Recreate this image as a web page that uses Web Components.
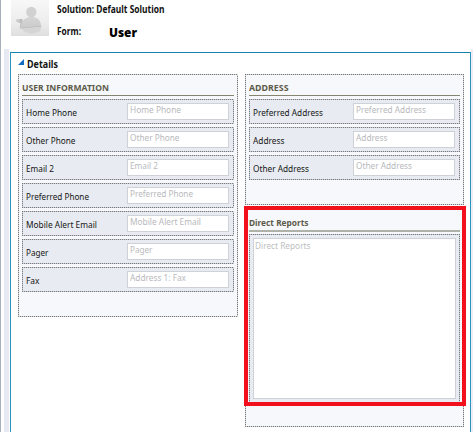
<!DOCTYPE html>
<html lang="en"><head><meta charset="utf-8"><title>Form: User</title>
<style>html,body{margin:0;width:473px;height:432px;overflow:hidden;background:#fff;font-family:"Noto Sans","Open Sans",sans-serif}</style></head>
<body><form-designer></form-designer>
<script>
const define=(name,html,setup)=>customElements.define(name,class extends HTMLElement{
  connectedCallback(){
    if(this.shadowRoot)return;
    this.attachShadow({mode:'open'}).innerHTML=html;
    if(setup)setup(this,this.shadowRoot);
  }
});
/* One line of text, condensed to the width in its "w" attribute. */
define('fit-text','<style>:host{display:block;white-space:nowrap;line-height:14px;height:14px}span{display:inline-block;transform-origin:0 50%}</style><span></span>',(el,root)=>{
  const s=root.querySelector('span');s.textContent=el.getAttribute('text');
  const w=+el.getAttribute('w');
  el.style.width=w+'px';
  s.style.transform=`scaleX(${(w/s.getBoundingClientRect().width).toFixed(4)})`;
});
define('user-picture',`<style>:host{display:block;width:38px;height:36px}svg{display:block}</style>
<svg width="38" height="36" viewBox="0 0 38 36"><defs>
<linearGradient id="b" x2="0" y2="1"><stop stop-color="#f8f8f8"/><stop offset=".65" stop-color="#ececec"/><stop offset="1" stop-color="#dedede"/></linearGradient>
<linearGradient id="p" x2="0" y2="1"><stop stop-color="#d6d6d6"/><stop offset="1" stop-color="#cbcbcb"/></linearGradient>
<linearGradient id="s"><stop stop-color="#d4d4d4"/><stop offset="1" stop-color="#b9b9b9"/></linearGradient></defs>
<rect width="38" height="36" fill="url(#b)"/>
<path d="M4.5 19.5l7-.8v7.8l-3 2 1-5.2-4-1.2z" fill="url(#s)"/>
<path d="M11 29l19-2-.5 4q-9 5-17 0z" fill="#d5d5d5"/>
<path d="M9.5 28.3q1-9 6.5-10.6l2.5-.6-.5-1.6h5l-.5 1.6 3 .9q4.3 2 4.7 8.4z" fill="url(#p)"/>
<path d="M9.5 28.3l20.7-1.9" stroke="#b0b0b0" stroke-width=".6"/>
<circle cx="20.3" cy="12" r="5.2" fill="#d1d1d1"/></svg>`);
define('form-header',`<style>:host{display:grid;grid-template-columns:38px 1fr;column-gap:8px;height:49px;padding-left:10px;box-sizing:border-box;font-weight:600;color:#111}
.t{padding-top:3px}.l{display:flex;margin-top:8px;align-items:center}.n{margin-left:27.5px;font-size:13px;font-weight:900;color:#000}.s,.f{font-size:9.8px}.s,.f{font-weight:700}</style>
<user-picture></user-picture><div class="t"><fit-text class="s" text="Solution: Default Solution" w="107.5"></fit-text>
<div class="l"><fit-text class="f" text="Form:" w="24"></fit-text><fit-text class="n" text="User" w="28"></fit-text></div></div>`);
const dots=(a,b,bg)=>`repeating-linear-gradient(90deg,${a} 0 1px,${b} 1px 2px) top/100% 1px no-repeat,
repeating-linear-gradient(90deg,${a} 0 1px,${b} 1px 2px) bottom/100% 1px no-repeat,
repeating-linear-gradient(${a} 0 1px,${b} 1px 2px) left/1px 100% no-repeat,
repeating-linear-gradient(${a} 0 1px,${b} 1px 2px) right/1px 100% no-repeat,${bg}`;
define('form-section',`<style>:host{display:block;box-sizing:border-box;background:${dots('#777a7c','#d2d4d6','#f7f8fb')};padding:7px 4px 0}
.h{height:14px;border-bottom:1px solid #85856f;margin-bottom:3px;color:#5d5c4c;font-size:9.5px;font-weight:700}
:host([soft]){padding-top:8px}:host([soft]) .h{border-bottom:2px solid #aeb2a8;margin-bottom:2px}
.rows{display:grid;gap:3px}</style><div class="h"></div><div class="rows"><slot></slot></div>`,(el,root)=>{
  root.querySelector('.h').innerHTML=line(el.getAttribute('heading'),el.getAttribute('w'));
});
const line=(text,w)=>`<fit-text text="${text}" w="${w}"></fit-text>`;
define('form-field',`<style>:host{display:grid;grid-template-columns:1fr 102px;height:25px;box-sizing:border-box;padding:4px 5px 0 3.5px;background:${dots('#777a7e','#c8cbd2','#e8ebf1')};font-size:9.6px}
.l{color:#161616;padding-top:3px}.i{height:17px;box-sizing:border-box;border:1px solid #ced1d6;background:#fff;color:#b8b9bc;padding-left:1.5px}.i fit-text{margin-top:-1px}</style><div class="l"></div><div class="i"></div>`,(el,root)=>{
  root.querySelector('.l').innerHTML=line(el.getAttribute('label'),el.getAttribute('w'));
  root.querySelector('.i').innerHTML=line(el.getAttribute('hint')||el.getAttribute('label'),el.getAttribute('hw')||el.getAttribute('w'));
});
define('form-area',`<style>:host{display:block;height:169px;box-sizing:border-box;padding:4px 4px 4px;background:${dots('#777a7e','#c8cbd2','#e8ebf1')};font-size:9.6px}
.i{height:161px;box-sizing:border-box;border:1px solid #ced1d6;background:#fff;color:#bebfc2;padding:0 1px}</style><div class="i">${line('Direct Reports',55.5)}</div>`);
define('form-tab',`<style>:host{display:block;box-sizing:border-box;margin:3px 2px 0 6px;height:380px;border:solid #2f94bd;border-top-color:#1682ae;border-width:1px 1px 0;padding:0 6px 0 7px;background:#fff}
.h{display:flex;height:21px;font-size:11px;font-weight:700;color:#151515;padding-top:4px;box-sizing:border-box}.h svg{margin:2px 3px 0 0}
.c{display:grid;grid-template-columns:220px 219px;justify-content:space-between}.r{display:grid;align-content:start;gap:3px}.hot{position:relative}
.hot:after{content:"";position:absolute;box-sizing:border-box;left:-1px;top:-2px;width:222px;height:200px;border:4px solid #f1101b}</style>
<div class="h"><svg width="6" height="6"><path d="M6 0V6H0z" fill="#146bc0"/></svg>${line('Details',31)}</div>
<div class="c"><form-section heading="USER INFORMATION" w="87" style="height:243px">
<form-field label="Home Phone" w="51"></form-field><form-field label="Other Phone" w="49.5"></form-field><form-field label="Email 2" w="28"></form-field><form-field label="Preferred Phone" w="63"></form-field><form-field label="Mobile Alert Email" w="71"></form-field><form-field label="Pager" w="22.5"></form-field><form-field label="Fax" w="13.5" hint="Address 1: Fax" hw="56"></form-field>
</form-section><div class="r"><form-section heading="ADDRESS" w="39.5" style="height:131px"><form-field label="Preferred Address" w="70"></form-field><form-field label="Address" w="31.5"></form-field><form-field label="Other Address" w="56"></form-field></form-section>
<div class="hot"><form-section soft heading="Direct Reports" w="59.5" style="height:219px"><form-area></form-area></form-section></div></div></div>`);
define('form-designer',`<style>:host{display:block;width:473px;height:432px;box-sizing:border-box;overflow:hidden;border-left:1px solid #a7afbd;background:#fff}
.b{display:flow-root;height:383px;margin-left:3px;background:linear-gradient(90deg,#e7eaf2 0 5px,#fff 5px 467px,#eceef5 467px)}</style>
<form-header></form-header><div class="b"><form-tab></form-tab></div>`);
</script></body></html>
